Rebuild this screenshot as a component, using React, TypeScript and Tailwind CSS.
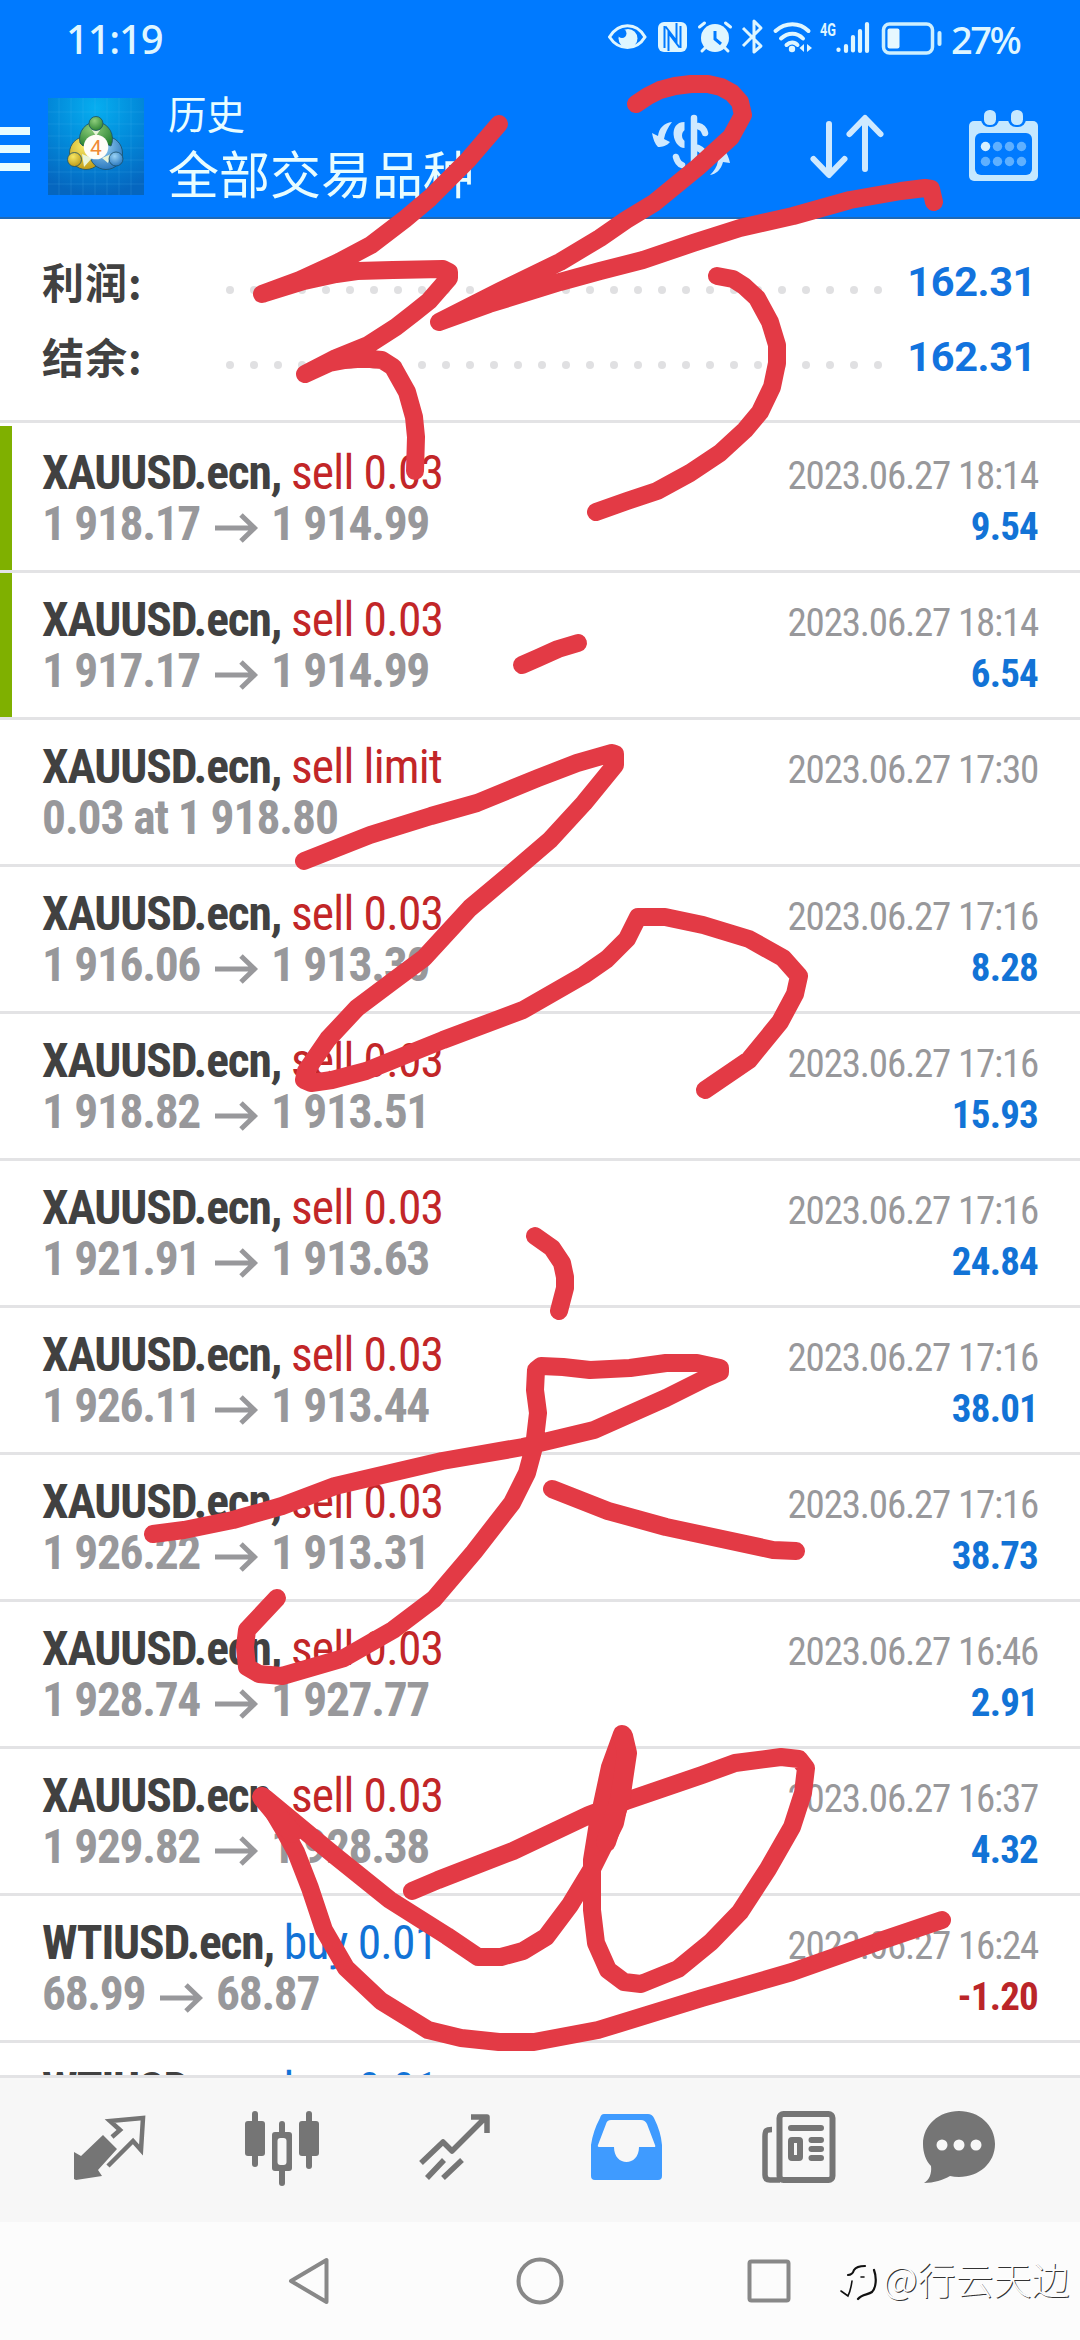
import type { ReactNode } from "react";

type Deal = {
  symbol: string;
  side: "sell" | "buy";
  action: string;
  from: string;
  to?: string;
  time: string;
  profit?: string;
  marked?: boolean;
};

const DEALS: Deal[] = [
  { symbol: "XAUUSD.ecn", side: "sell", action: "sell 0.03", from: "1 918.17", to: "1 914.99", time: "2023.06.27 18:14", profit: "9.54", marked: true },
  { symbol: "XAUUSD.ecn", side: "sell", action: "sell 0.03", from: "1 917.17", to: "1 914.99", time: "2023.06.27 18:14", profit: "6.54", marked: true },
  { symbol: "XAUUSD.ecn", side: "sell", action: "sell limit", from: "0.03 at 1 918.80", time: "2023.06.27 17:30" },
  { symbol: "XAUUSD.ecn", side: "sell", action: "sell 0.03", from: "1 916.06", to: "1 913.30", time: "2023.06.27 17:16", profit: "8.28" },
  { symbol: "XAUUSD.ecn", side: "sell", action: "sell 0.03", from: "1 918.82", to: "1 913.51", time: "2023.06.27 17:16", profit: "15.93" },
  { symbol: "XAUUSD.ecn", side: "sell", action: "sell 0.03", from: "1 921.91", to: "1 913.63", time: "2023.06.27 17:16", profit: "24.84" },
  { symbol: "XAUUSD.ecn", side: "sell", action: "sell 0.03", from: "1 926.11", to: "1 913.44", time: "2023.06.27 17:16", profit: "38.01" },
  { symbol: "XAUUSD.ecn", side: "sell", action: "sell 0.03", from: "1 926.22", to: "1 913.31", time: "2023.06.27 17:16", profit: "38.73" },
  { symbol: "XAUUSD.ecn", side: "sell", action: "sell 0.03", from: "1 928.74", to: "1 927.77", time: "2023.06.27 16:46", profit: "2.91" },
  { symbol: "XAUUSD.ecn", side: "sell", action: "sell 0.03", from: "1 929.82", to: "1 928.38", time: "2023.06.27 16:37", profit: "4.32" },
  { symbol: "WTIUSD.ecn", side: "buy", action: "buy 0.01", from: "68.99", to: "68.87", time: "2023.06.27 16:24", profit: "-1.20" },
  { symbol: "WTIUSD.ecn", side: "buy", action: "buy 0.01", from: "", time: "" },
];

const SUMMARY = [
  { label: "利润:", value: "162.31" },
  { label: "结余:", value: "162.31" },
];

// Red pen strokes, one polyline each
const PEN_STROKES = [
  "499,124 468,160 430,198 405,219 371,245 339,262 300,280 262,294 304,281 336,274 357,271 393,270 443,269 449,272 449,278 429,301 414,313 396,327 368,345 336,358 305,374 329,363 345,360 357,359 370,359 382,360 393,367 407,392 414,417 416,437 415,471",
  "636,104 648,96 660,90 675,86 691,84 708,84 721,87 732,93 740,102 743,115 731,137 698,167 654,203 626,220 600,238 560,262 500,291 439,322 489,304 560,282 600,271 643,260 693,243 740,228 793,216 850,200 901,191 925,188 931,189 934,202",
  "717,276 733,279 744,286 757,298 770,322 777,345 777,363 772,387 760,412 745,430 720,453 690,473 657,491 627,501 596,512",
  "522,665 538,658 558,649 578,643",
  "304,861 370,835 431,816 477,803 538,778 577,763 612,753 615,754 615,765 584,803 550,840 508,876 470,908 424,958 393,981 357,1008 328,1039 306,1071 304,1080 311,1083 332,1080 366,1071 443,1040 523,1010 584,975 607,959 627,939 638,917 665,917 703,925 749,939 783,958 799,976 795,994 780,1022 749,1060 705,1090",
  "535,1236 552,1248 562,1263 565,1277 565,1288 559,1311",
  "153,1534 184,1530 233,1520 282,1506 335,1486 442,1461 523,1447 594,1430 666,1398 706,1378 720,1372 720,1368 697,1363 666,1363 630,1368 590,1370 563,1367 541,1366 536,1370 535,1390 538,1413 534,1447 527,1473 512,1503 474,1552 434,1599 393,1630 344,1658 282,1676 259,1674 247,1667 245,1647 247,1630 277,1598",
  "552,1489 608,1511 666,1527 773,1550 796,1551",
  "412,1891 438,1880 513,1851 589,1815 626,1801 702,1775 735,1763 781,1757 799,1759 806,1768 803,1793 792,1827 768,1869 740,1912 711,1942 678,1969 641,1984 624,1982 608,1970 596,1943 592,1910 592,1860 598,1823 610,1767 622,1734 626,1753 622,1790 615,1823 593,1867 570,1905 546,1937 523,1951 501,1957 478,1957 447,1936 390,1900 334,1855 265,1798 284,1830 296,1852 310,1888 324,1930 346,1968 381,2001 428,2030 461,2038 499,2042 534,2042 598,2030 702,1998 792,1972 877,1942 942,1920",
];

// pressure makes a few spots of the last character thicker
const PEN_BLOBS = ["623,1736 627,1753 620,1800 606,1842", "262,1797 292,1833"];

function PenLayer() {
  return (
    <svg className="pointer-events-none absolute inset-0 z-20 h-full w-full" viewBox="0 0 1080 2340" fill="none" stroke="#e33a45" strokeWidth="18" strokeLinecap="round" strokeLinejoin="round">
      {PEN_STROKES.map((points) => (
        <polyline key={points} points={points} />
      ))}
      {PEN_BLOBS.map((points) => (
        <polyline key={points} points={points} strokeWidth="20" />
      ))}
    </svg>
  );
}

function StatusBar() {
  return (
    <div className="flex h-[80px] items-start pl-[66px] font-['Noto_Sans',sans-serif] font-medium text-[#dff6ff]">
      <span className="mt-[11px] w-[542px] text-[40px] leading-[55px] tracking-[-1.2px]">11:19</span>
      <svg className="mt-[18px] shrink-0" width="270" height="40" viewBox="608 18 270 40" fill="none" stroke="#dff6ff" strokeWidth="3">
        {/* eye */}
        <path d="M609.500 37c9-15 27-15 35.500 0c-8.500 14-26.500 14-35.500 0z" />
        <circle cx="628" cy="38.500" r="9.500" fill="#dff6ff" stroke="none" />
        <circle cx="622" cy="33.500" r="4.500" fill="#007aff" stroke="none" />
        {/* nfc */}
        <rect x="658" y="22" width="29" height="30" rx="6" fill="#dff6ff" stroke="none" />
        <path d="M664.500 48V26M680.500 26v22M668.500 51V33l11 14.500M676.500 23v18l-11-14.500" stroke="#007aff" strokeWidth="2" />
        {/* alarm */}
        <circle cx="715" cy="38" r="14" fill="#dff6ff" stroke="none" />
        <path d="M699.500 27l5-4M730.500 27l-5-4M705 48l-3 3M725 48l3 3" strokeLinecap="round" />
        <path d="M715 31v8l6 5" stroke="#007aff" strokeWidth="3" />
        {/* bluetooth */}
        <path d="M743 28l18 18l-7 6V21l7 7l-18 18" strokeWidth="3" strokeLinejoin="round" />
        {/* wifi */}
        <path d="M775.500 31c10-9 24-9 33 0M781 38.500c7-6.500 16-6.500 22 0M786.500 45c3.500-3.500 8-3.500 11 0" strokeWidth="4" strokeLinecap="round" />
        <circle cx="792" cy="49" r="3.200" fill="#dff6ff" stroke="none" />
        <path d="M804 44l-4.500 4l4.500 4zM807 44l5 4l-5 4z" fill="#dff6ff" stroke="none" />
        {/* signal */}
        <path d="M838.500 49.500v0.500M846 46v5M853 37v13.500M860 31v20M867 24v27" strokeWidth="4.200" strokeLinecap="round" />
        <text x="820" y="35.500" fill="#dff6ff" stroke="none" textLength="16" lengthAdjust="spacingAndGlyphs" className="font-['Roboto'] text-[19px] font-bold">4G</text>
      </svg>
      <svg className="mt-[20px] ml-[3px] shrink-0" width="64" height="36" viewBox="881 20 64 36" fill="none" stroke="#cdefff">
        <rect x="883.500" y="24" width="49" height="29" rx="6" strokeWidth="3.500" />
        <rect x="887.500" y="28.500" width="12" height="20" rx="2" fill="#e6f8ff" stroke="none" />
        <path d="M939.500 33v11" strokeWidth="4" strokeLinecap="round" />
      </svg>
      <span className="mt-[12px] ml-[6px] text-[38px] leading-[55px] tracking-[-2.5px]">27%</span>
    </div>
  );
}

function AppLogo() {
  return (
    <svg className="shrink-0" width="96" height="97" viewBox="0 0 96 97">
      <defs>
        <radialGradient id="tile" cx="0.500" cy="0.100" r="0.900">
          <stop offset="0" stopColor="#06aef0" />
          <stop offset="0.550" stopColor="#0287d8" />
          <stop offset="1" stopColor="#0566bf" />
        </radialGradient>
        <radialGradient id="green" cx="0.400" cy="0.300" r="0.800">
          <stop offset="0" stopColor="#8fce7c" />
          <stop offset="1" stopColor="#237d2c" />
        </radialGradient>
        <radialGradient id="gold" cx="0.400" cy="0.300" r="0.800">
          <stop offset="0" stopColor="#f6e765" />
          <stop offset="1" stopColor="#b8920f" />
        </radialGradient>
        <radialGradient id="azure" cx="0.400" cy="0.300" r="0.800">
          <stop offset="0" stopColor="#9ad3f5" />
          <stop offset="1" stopColor="#1c6db8" />
        </radialGradient>
      </defs>
      <rect width="96" height="97" fill="url(#tile)" />
      <path d="M11 0v97M23 0v97M35 0v97M47 0v97M59 0v97M71 0v97M83 0v97M0 14h96M0 26h96M0 38h96M0 50h96M0 62h96M0 74h96M0 86h96" stroke="#5cc4f5" strokeOpacity="0.180" />
      <g stroke="#1c4f66" strokeWidth="0.800">
        <circle cx="38" cy="55" r="16.500" fill="url(#gold)" />
        <circle cx="58" cy="55" r="16.500" fill="url(#azure)" />
        <path d="M32 45a16.500 17 0 1 1 31 3l-15-6l-13 6z" fill="url(#green)" />
        <path d="M34 56l10 4l-8 9zM54 60l9-4l-3 9z" fill="#e8f4d8" stroke="none" />
        <path d="M44 32h8l-4 6z" fill="#e8f4d8" stroke="none" />
        <circle cx="48" cy="25.500" r="7" fill="url(#green)" />
        <circle cx="26.500" cy="61.500" r="7" fill="url(#gold)" />
        <circle cx="68" cy="61" r="7" fill="url(#azure)" />
      </g>
      <circle cx="48" cy="49" r="12.300" fill="#fffdf8" />
      <text x="48" y="56.500" textAnchor="middle" fill="#f08a35" className="font-['Roboto'] text-[21px]">4</text>
    </svg>
  );
}

function Header() {
  return (
    <div className="flex h-[137px] items-start">
      <div className="mt-[47px] flex w-[30px] flex-col gap-[10px]">
        <span className="h-[8px] bg-[#e8fdff]" />
        <span className="h-[8px] bg-[#e8fdff]" />
        <span className="h-[8px] bg-[#e8fdff]" />
      </div>
      <div className="mt-[18px] ml-[18px]">
        <AppLogo />
      </div>
      <div className="ml-[24px] w-[481px] font-['Noto_Sans_CJK_SC',sans-serif] text-[#e8fdff]">
        <div className="mt-[4px] text-[38.500px] leading-[56px]">历史</div>
        <div className="text-[51px] leading-[64px]">全部交易品种</div>
      </div>
      <svg className="mt-[30px] shrink-0" width="84" height="72" viewBox="648 110 84 72" fill="none" stroke="#cfe9ff" strokeWidth="6.500" strokeLinecap="round">
        <path d="M693 118v54" />
        <path d="M683.500 122v26c-12 0-17-26 0-26z" fill="#cfe9ff" stroke="none" />
        <path d="M684 130v11c-4-2-4-9 0-11z" fill="#007aff" stroke="none" />
        <path d="M697 126c4 1 6 3 7 7M697 148c9 4 10 15 0 19M675 157c1 4 3 7 6 8" />
        <path d="M671 122c-8 1-13 6-14 14l-6-3c1 6 3 11 6 14c4 0 9-1 12-5l-6-3c1-6 4-12 8-17zM709 175c6-1 11-5 13-13l7 1c-1-5-3-10-6-13c-4 1-8 4-12 9l6 2c-1 6-4 10-8 14z" fill="#cfe9ff" stroke="none" />
      </svg>
      <svg className="mt-[30px] ml-[74px] shrink-0" width="80" height="72" viewBox="806 110 80 72" fill="none" stroke="#cfe9ff" strokeWidth="6" strokeLinecap="round" strokeLinejoin="round">
        <path d="M828 124v50M812.500 159l15.500 16l15.500-16M864 169v-50M848.500 134l15.500-16l15.500 16" />
      </svg>
      <svg className="mt-[28px] ml-[80px] shrink-0" width="72" height="76" viewBox="966 108 72 76">
        <rect x="968" y="121" width="69" height="60" rx="5" fill="#c5e8ff" />
        <rect x="974" y="133" width="57" height="42" rx="6" fill="#007aff" />
        <rect x="980" y="107" width="18" height="20" rx="8" fill="#007aff" />
        <rect x="1007" y="107" width="18" height="20" rx="8" fill="#007aff" />
        <rect x="983" y="110" width="12" height="15" rx="5.500" fill="#c5e8ff" />
        <rect x="1010" y="110" width="12" height="15" rx="5.500" fill="#c5e8ff" />
        <g fill="#5fb0ff">
          <circle cx="984.500" cy="146.500" r="4.700" fill="#d8f0ff" />
          <circle cx="996.500" cy="146.500" r="4.700" />
          <circle cx="1008.500" cy="146.500" r="4.700" />
          <circle cx="1020.500" cy="146.500" r="4.700" />
          <circle cx="984.500" cy="161.500" r="4.700" />
          <circle cx="996.500" cy="161.500" r="4.700" />
          <circle cx="1008.500" cy="161.500" r="4.700" />
          <circle cx="1020.500" cy="161.500" r="4.700" />
        </g>
      </svg>
    </div>
  );
}

function Summary() {
  return (
    <div className="h-[204px] border-b-[3px] border-[#e3e3e5] pt-[27px] pr-[44px] pl-[42px]">
      {SUMMARY.map((line) => (
        <div key={line.label} className="flex h-[75px] items-start">
          <div className="mt-[-3px] w-[184px] font-['Noto_Sans_CJK_SC',sans-serif] text-[42px] leading-[75px] font-bold tracking-[1px] text-[#414141]">{line.label}</div>
          <div className="flex w-[656px] justify-between pt-[40px]">
            {Array.from({ length: 28 }, (_, i) => (
              <span key={i} className="size-[8px] rounded-full bg-[#e0e0e2]" />
            ))}
          </div>
          <div className="ml-auto pt-[2px] text-[41.500px] leading-[68px] font-bold tracking-[-0.4px] text-[#1273de]">{line.value}</div>
        </div>
      ))}
    </div>
  );
}

function DealRow({ deal }: { deal: Deal }) {
  return (
    <div className="flex h-[147px] shrink-0 border-b-[3px] border-[#e3e3e5] [font-stretch:75%]">
      <div className={deal.marked ? "w-[12px] bg-[#7fb000]" : "w-[12px]"} />
      <div className="flex flex-1 justify-between pr-[42px] pl-[30px]">
        <div className="pt-[22px] text-[47.500px] leading-[51px] whitespace-nowrap">
          <div className="tracking-[-1.05px]">
            <span className="font-bold tracking-[-1.15px] text-[#414141]">{deal.symbol}, </span>
            <span className={deal.side === "sell" ? "tracking-[-0.8px] text-[#c22628]" : "tracking-[-0.8px] text-[#1273d6]"}>{deal.action}</span>
          </div>
          <div className={deal.to ? "flex items-center font-bold tracking-[-1.35px] text-[#98989b]" : "font-bold tracking-[-1.1px] text-[#98989b]"}>
            {deal.from}
            {deal.to && (
              <>
                <svg className="mt-[6px] mr-[13px] ml-[15px]" width="43" height="30" viewBox="0 0 43 30" fill="none" stroke="#98989b" strokeWidth="5">
                  <path d="M0 15h39M26 2l13.500 13L26 28" />
                </svg>
                {deal.to}
              </>
            )}
          </div>
        </div>
        <div className="pt-[25px] text-right text-[39px] leading-[51px]">
          <div className="tracking-[-1.2px] text-[#98989b]">{deal.time}</div>
          <div className={deal.profit?.startsWith("-") ? "font-bold tracking-[-0.8px] text-[#bb2529]" : "font-bold tracking-[-0.8px] text-[#1273d6]"}>{deal.profit}</div>
        </div>
      </div>
    </div>
  );
}

function Tab({ children }: { children: ReactNode }) {
  return (
    <div className="flex w-[172px] justify-center">
      <svg width="80" height="80" viewBox="0 0 80 80" fill="none" stroke="#757575">
        {children}
      </svg>
    </div>
  );
}

function TabBar() {
  return (
    <div className="flex h-[147px] items-start border-t-[3px] border-[#e3e3e5] bg-[#f7f7f7] pt-[30px] pl-[24px]">
      <Tab>
        {/* opposite trade arrows */}
        <path d="M4 44l7 4l22-21l14 14l-19 21l4 6l-26 4l-2-1z" fill="#757575" stroke="none" />
        <path d="M42 29l8-7l-10-9l33-3l-2 32l-8-9l-25 25" strokeWidth="4.500" />
      </Tab>
      <Tab>
        <g fill="#757575" stroke="none">
          <rect x="3" y="13" width="20" height="35" rx="3" />
          <rect x="10" y="3" width="6" height="56" rx="3" />
          <rect x="57" y="13" width="20" height="35" rx="3" />
          <rect x="64" y="3" width="6" height="58" rx="3" />
          <rect x="37" y="13" width="6" height="65" rx="3" />
          <rect x="30" y="24" width="20" height="39" rx="3" />
        </g>
        <rect x="35.500" y="30" width="9" height="27" rx="3" fill="#f7f7f7" stroke="none" />
      </Tab>
      <Tab>
        <path d="M7 55l22-21l9 9l34-34M57 9h16v16M13 70l17-18M29 70l19-18" strokeWidth="5.500" strokeLinejoin="round" />
      </Tab>
      <Tab>
        <path d="M18 6h44q4 0 6 4q7 14 8 27v31q0 4-4 4H9q-4 0-4-4V37q2-14 9-27q1-4 4-4z" fill="#3f9bff" stroke="none" />
        <path d="M25 12h30q4 0 6 4l8 21q1 2-1 2H53c0 20-25 20-25 0H14q-3 0-2-2l8-21q1-4 5-4z" fill="#f7f7f7" stroke="none" />
      </Tab>
      <Tab>
        <rect x="21.500" y="6" width="53" height="66" rx="4" strokeWidth="6" />
        <path d="M14 21.500c-6 0-7 1-7 7V67q0 5 5 5h10" strokeWidth="5.500" />
        <path d="M33 20h30M53.500 32h9.500M53.500 41h9.500M53.500 50h9.500" strokeWidth="6" strokeLinecap="round" />
        <rect x="33" y="32" width="9" height="18" rx="1" strokeWidth="6" />
      </Tab>
      <div className="flex w-[150px] justify-center">
        <svg width="80" height="80" viewBox="0 0 80 80">
          <path d="M40 3c20 0 36 14 36 33S60 69 40 69q-5 0-9-1c-7 4-16 7-26 7c5-3 8-9 7-17C7 53 4 45 4 36C4 17 20 3 40 3z" fill="#757575" />
          <circle cx="23" cy="37" r="5.500" fill="#f7f7f7" />
          <circle cx="40" cy="37" r="5.500" fill="#f7f7f7" />
          <circle cx="57" cy="37" r="5.500" fill="#f7f7f7" />
        </svg>
      </div>
    </div>
  );
}

function SystemNav() {
  return (
    <div className="relative flex h-[118px] items-start bg-[#fcfcfc] pt-[34px] pl-[284px]">
      <svg width="50" height="50" viewBox="0 0 50 50" fill="none" stroke="#888" strokeWidth="4" strokeLinejoin="round">
        <path d="M42.500 4v42L7 25z" />
      </svg>
      <svg className="ml-[181px]" width="50" height="50" viewBox="0 0 50 50" fill="none" stroke="#888" strokeWidth="4">
        <circle cx="25" cy="25" r="21.500" />
      </svg>
      <svg className="ml-[179px]" width="50" height="50" viewBox="0 0 50 50" fill="none" stroke="#888" strokeWidth="4">
        <rect x="5.500" y="5.500" width="39" height="39" rx="2" />
      </svg>
      <div className="absolute top-[31px] left-[839px] flex items-center">
        <svg className="mt-[4px]" width="44" height="46" viewBox="0 0 44 46" fill="none" stroke="#111" strokeLinecap="round">
          <path d="M9 18c4 0 5-2 6-5c2-3 5-4 11-4" strokeWidth="2.200" />
          <path d="M22 20h3M13 24c-1 7-2 11-4 15l-7-5" strokeWidth="1.600" />
          <path d="M35 13c3 8 2 18-2 22c-4 3-10 2-14 7" strokeWidth="2.200" />
        </svg>
        <div className="font-['Noto_Sans_CJK_SC',sans-serif] text-[38px] leading-[46px] font-light whitespace-nowrap text-[#fdfdfd] [text-shadow:1px_1px_0_#333]">@行云天边</div>
      </div>
    </div>
  );
}

export default function App() {
  return (
    <div className="relative flex h-[2340px] w-[1080px] flex-col overflow-hidden bg-white font-['Roboto',sans-serif]">
      <div className="h-[219px] shrink-0 border-b-2 border-[#1d69b8] bg-[#007aff]">
        <StatusBar />
        <Header />
      </div>
      <Summary />
      <div className="flex h-[1652px] shrink-0 flex-col overflow-hidden pt-[3px]">
        {DEALS.map((deal, i) => (
          <DealRow key={i} deal={deal} />
        ))}
      </div>
      <TabBar />
      <SystemNav />
      <PenLayer />
    </div>
  );
}
